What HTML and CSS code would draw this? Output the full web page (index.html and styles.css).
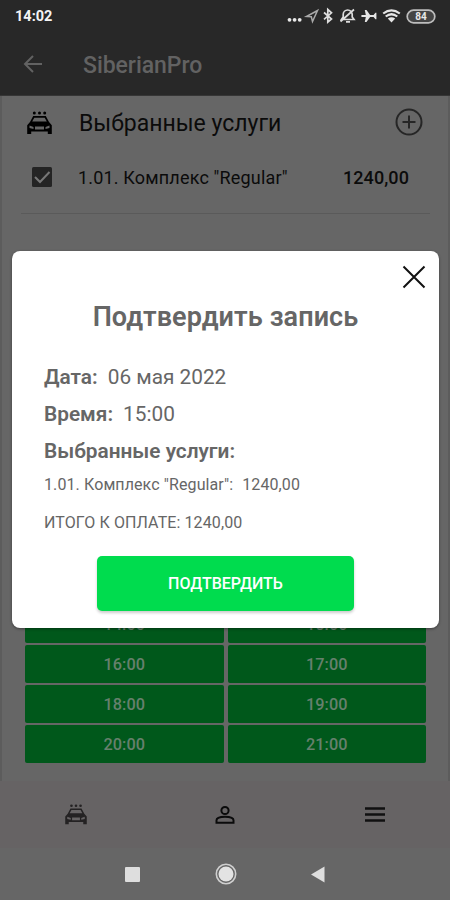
FILE: index.html
```html
<!DOCTYPE html>
<html lang="ru">
<head>
<meta charset="utf-8">
<title>SiberianPro</title>
<link rel="stylesheet" href="styles.css">
</head>
<body>
<svg width="0" height="0" class="defs">
  <symbol id="car" viewBox="0 0 25 24">
    <circle cx="7.3" cy="2" r="1.5"/><circle cx="12.5" cy="2" r="1.5"/><circle cx="17.7" cy="2" r="1.500"/>
    <path fill-rule="evenodd" d="M6.200 5h12.600l3.200 6 2.800 3.200V23h-4v-2.500H4.200V23h-4v-8.800L3 11zM7.300 6.800L5.200 10.600h14.600l-2.100-3.800zM2.500 14.500v2.500l4 1v-2zM22.500 14.500l-4 1.500v2l4-1zM8 15.500v3h9v-3z"/>
  </symbol>
</svg>
<div class="phone">
  <header class="status">
    <span class="clock">14:02</span>
    <svg class="status-icons" width="152" height="20" viewBox="0 0 152 20">
      <g fill="#e8e8e8"><circle cx="3.500" cy="12.800" r="1.900"/><circle cx="8.600" cy="12.800" r="1.900"/><circle cx="13.700" cy="12.800" r="1.900"/></g>
      <path d="M20.500 9.500L31.500 3.500L26.500 14.500L25.300 9.800z" fill="none" stroke="#a9a9a9" stroke-width="1.500"/>
      <path d="M38 5.500l7.500 6.500-3.700 3.200V2.500L45.500 5.800L38 12.300" fill="none" stroke="#ddd" stroke-width="1.700"/>
      <g fill="none" stroke="#ddd" stroke-width="1.700"><path d="M55.500 12.500h12.500l-1.800-2.500V7.500a4.500 4.500 0 0 0-9 0V10zM60 14.800h4M54.500 14.500L68 2.500"/></g>
      <path fill="#e5e5e5" d="M75.800 8.100h4l-1-5h1.700l3.600 5h3.500l1.800-2.300h1v6.400h-1l-1.800-2.300h-3.500l-3.600 5h-1.700l1-5h-4q-1.500-.9 0-1.800z"/>
      <g fill="none" stroke="#e5e5e5" stroke-width="2.200"><path d="M97.200 6.500q8.300-6.400 16.600 0M99.700 9.500q5.800-4.500 11.600 0"/></g>
      <path fill="#e5e5e5" d="M101.800 11.500q3.700-2.700 7.400 0l-3.700 4z"/>
      <rect x="121.200" y="3.200" width="27.600" height="12.600" rx="6.300" fill="#444" stroke="#bdbdbd" stroke-width="1.700"/>
      <text x="135" y="13.200" class="battery" text-anchor="middle">84</text>
    </svg>
  </header>
  <div class="appbar">
    <svg width="20" height="18" viewBox="0 0 20 18" fill="none" stroke="#626262" stroke-width="2"><path d="M19 9H2M10 1L2 9l8 8"/></svg>
    <span class="brand">SiberianPro</span>
  </div>
  <main class="content">
    <section class="services">
      <div class="row heading">
        <svg class="car" width="25" height="24"><use href="#car"/></svg>
        <span class="heading-text">Выбранные услуги</span>
        <svg class="add" width="28" height="28" viewBox="0 0 28 28" fill="none" stroke="#262626" stroke-width="2"><circle cx="14" cy="14" r="12.500"/><path d="M14 7.500v13M7.500 14h13"/></svg>
      </div>
      <div class="row item">
        <svg class="check" width="20" height="20" viewBox="0 0 20 20"><rect width="20" height="20" rx="1.500" fill="#242424"/><path d="M3 10l5 5L17.500 5" fill="none" stroke="#777" stroke-width="2"/></svg>
        <span class="item-text">1.01. Комплекс "Regular"</span>
        <span class="item-price">1240,00</span>
      </div>
    </section>
    <section class="slots">
      <div>14:00</div><div>15:00</div>
      <div>16:00</div><div>17:00</div>
      <div>18:00</div><div>19:00</div>
      <div>20:00</div><div>21:00</div>
    </section>
  </main>
  <nav class="tabs">
    <svg class="tab-car" width="22" height="21"><use href="#car"/></svg>
    <svg width="20" height="20" viewBox="0 0 20 20" fill="none" stroke="#0b0b0b" stroke-width="2"><circle cx="10" cy="5.500" r="3.600"/><path d="M1.500 17.800v-2.600q0-3.500 8.500-3.500t8.500 3.500v2.600z"/></svg>
    <svg width="22" height="16" viewBox="0 0 22 16" stroke="#101010" stroke-width="2.300"><path d="M1 1.500h20M1 7.500h20M1 13.500h20"/></svg>
  </nav>
  <footer class="system">
    <svg width="15" height="15"><rect width="15" height="15" rx="1" fill="#dedede"/></svg>
    <svg width="22" height="22" viewBox="0 0 22 22"><circle cx="11" cy="11" r="9.700" fill="none" stroke="#cfcfcf" stroke-width="1.600"/><circle cx="11" cy="11" r="7.500" fill="#e3e3e3"/></svg>
    <svg width="14" height="17" viewBox="0 0 14 17"><path d="M0 8.500L13.500.5v16z" fill="#dedede"/></svg>
  </footer>
  <section class="dialog">
    <svg class="close" width="24" height="24" viewBox="0 0 24 24" stroke="#111" stroke-width="2"><path d="M1.500 1.500l21 21M22.500 1.500l-21 21"/></svg>
    <h1>Подтвердить запись</h1>
    <p class="line"><b>Дата:</b><span>06 мая 2022</span></p>
    <p class="line"><b>Время:</b><span>15:00</span></p>
    <p class="line"><b>Выбранные услуги:</b></p>
    <p class="small"><span>1.01. Комплекс "Regular":</span><span>1240,00</span></p>
    <p class="small total">ИТОГО К ОПЛАТЕ: 1240,00</p>
    <button>ПОДТВЕРДИТЬ</button>
  </section>
</div>
</body>
</html>
```
FILE: styles.css
```css
* { box-sizing: border-box; }
body { margin: 0; font-family: Roboto, "Liberation Sans", sans-serif; }
.defs { position: absolute; }
svg { display: block; flex: none; }
.phone { position: relative; width: 450px; height: 900px; overflow: hidden; display: flex; flex-direction: column; background: #666; white-space: nowrap; }
.status { height: 32px; padding: 7px 12px 0 15px; display: flex; justify-content: space-between; background: #282828; }
.clock { font-size: 14.5px; font-weight: 700; line-height: 20px; color: #f4f4f4; }
.battery { font-size: 10px; font-weight: 700; fill: #e8e8e8; }
.appbar { height: 64px; padding: 0 24px 0 23px; display: flex; align-items: center; gap: 40px; background: #282828; border-bottom: 1px solid #363636; }
.brand { font-size: 23px; font-weight: 500; color: #626262; line-height: 28px; margin-top: 5px; letter-spacing: -.05px; }
.content { height: 685px; padding: 0 22px 0 23px; border-left: 2px solid #5c5c5c; border-right: 2px solid #5c5c5c; }
.services { height: 118px; margin: 0 -4px; border-bottom: 1px solid #5a5a5a; }
.row { display: flex; align-items: center; color: #0b0b0b; }
.heading { height: 54px; padding: 0 7px 0 6px; }
.heading-text { margin-left: 27px; font-size: 23px; }
.add { margin-left: auto; margin-top: -2px; }
.item { height: 54px; padding: 0 21px 0 11px; }
.item-text { margin-left: 26px; font-size: 18px; letter-spacing: .17px; }
.item-price { margin-left: auto; font-size: 18px; font-weight: 500; letter-spacing: .1px; }
.slots { margin-top: 391px; display: grid; grid-template-columns: 198.5px 198.5px; grid-auto-rows: 38px; gap: 2px 4px; }
.slots div { display: flex; align-items: center; justify-content: center; padding-top: 1px; border-radius: 2px; background: #00581b; color: #66806d; font-size: 16.3px; font-weight: 500; }
.tabs { height: 67px; background: #666364; display: grid; grid-template-columns: repeat(3, 1fr); place-items: center; padding-left: 1px; }
.tab-car { fill: #242223; }
.system { height: 52px; padding: 0 125px; display: flex; align-items: center; justify-content: space-between; background: #666; }
.dialog { position: absolute; left: 12px; top: 251px; width: 427px; height: 377px; padding: 50px 32px 0; border-radius: 8px; background: #fff; color: #666; box-shadow: 0 1px 3px #0006; }
.close { position: absolute; right: 13px; top: 14px; }
h1 { margin: 0 0 25px; font-size: 27px; line-height: 32px; font-weight: 600; text-align: center; letter-spacing: .1px; }
.line { margin: 0; height: 37px; line-height: 38px; font-size: 20.8px; display: flex; gap: 10px; }
.line b { font-weight: 600; }
.small { margin: 0; height: 31px; line-height: 31px; font-size: 16px; letter-spacing: .1px; display: flex; gap: 9px; }
.total { margin-top: 7px; }
button { display: block; width: 257px; height: 55px; margin: 18px 0 0 53px; padding: 0; border: 0; border-radius: 5px; background: #00dc4e; color: #fff; font: 500 16px Roboto, sans-serif; box-shadow: 0 2px 3px #0003; }
```
